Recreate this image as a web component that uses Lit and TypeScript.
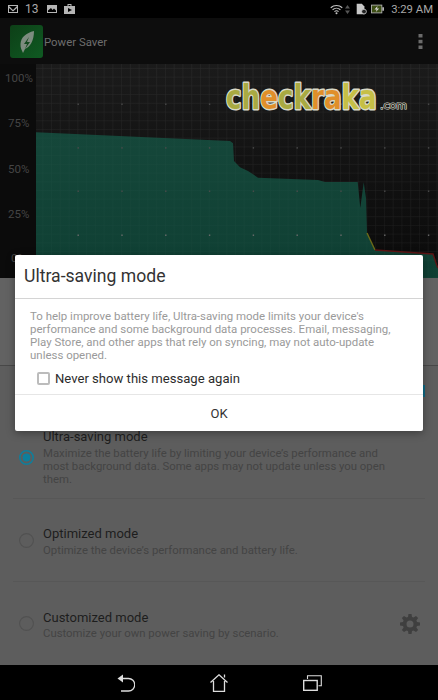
import { LitElement, html, css, svg } from "lit";
import { customElement } from "lit/decorators.js";

const MODES = [
  { name: "Ultra-saving mode", desc: "Maximize the battery life by limiting your device\u2019s performance and most background data. Some apps may not update unless you open them.", on: true, cls: "m1" },
  { name: "Optimized mode", desc: "Optimize the device\u2019s performance and battery life.", on: false, cls: "m2" },
  { name: "Customized mode", desc: "Customize your own power saving by scenario.", on: false, cls: "m3" },
];

const AREA = "36,132.3 230,141 233,143.3 234,161 240,167.3 248,171 258,177.7 318,180 325,182 357.7,182 360.3,208 363.7,182.3 366,198 367,233 375,250 433,254 436.7,265 438,268 438,278 36,278";

@customElement("app-root")
export class AppRoot extends LitElement {
  static styles = css`
    :host { display: block; width: 438px; height: 700px; position: relative; overflow: hidden; background: #5d5d5d; font-family: Roboto, "Liberation Sans", sans-serif; }
    .page { display: flex; flex-direction: column; height: 700px; }
    .status { height: 18px; background: #000; display: flex; align-items: center; padding: 0 5px 0 8px; color: #a8a8a8; font-size: 12px; flex: none; }
    .status svg { display: block; flex: none; }
    .status .n { margin: 0 8px 0 7px; }
    .spacer { flex: 1; }
    .time { font-size: 11.3px; margin-left: 7px; }
    .bar { height: 46px; background: #0d0d0d; display: flex; align-items: center; flex: none; color: #6e6e6e; font-size: 11.4px; padding-left: 10px; }
    .bar .title { margin-left: 1px; padding-top: 1px; }
    .chart { height: 214px; flex: none; display: block; width: 438px; background: #0a0a0a; }
    .modes { flex: 1; display: flex; flex-direction: column; padding: 0 13px; }
    .head { height: 87px; flex: none; background: #626262; margin: 0 -13px; border-bottom: 1px solid #484848; }
    .stub-row { height: 63px; flex: none; display: flex; justify-content: flex-end; }
    .stub { width: 2px; height: 12px; margin-top: 19px; background: #0e6a85; }
    .mode { display: grid; grid-template-columns: 30px 1fr 32px; align-items: center; border-bottom: 1px solid #575757; }
    .mode:last-child { border-bottom: 0; }
    .m1 { height: 70px; align-items: start; box-sizing: border-box; }
    .m2 { height: 82px; flex: none; }
    .m3 { flex: 1; }
    .m2 .txt, .m3 .txt { padding-top: 3px; }
    .radio { display: block; margin-left: 6px; }
    .m1 .radio { margin-top: 21px; }
    .name { font-size: 13px; color: #1d1d1d; line-height: 16px; }
    .desc { font-size: 11.35px; color: #444; line-height: 13.2px; margin-top: 1.8px; }
    .gear { display: block; justify-self: center; margin-left: 2px; }
    .nav { height: 35px; background: #000; flex: none; display: flex; align-items: center; justify-content: center; gap: 75px; }
    .nav svg { display: block; }
    .dialog { position: absolute; left: 15px; top: 255px; width: 408px; height: 176px; background: #fff; border-radius: 2px; box-shadow: 0 2px 8px rgba(0,0,0,.35); display: flex; flex-direction: column; }
    .dtitle { height: 44px; box-sizing: border-box; border-bottom: 1px solid #d4d4d4; font-size: 17.6px; color: #333; padding: 11px 0 0 9px; line-height: 20px; }
    .dbody { font-size: 11.46px; color: #9a9a9a; line-height: 13.2px; padding: 10.5px 30px 0 15px; }
    .check { display: flex; align-items: center; font-size: 13.1px; color: #2c2c2c; padding: 8px 0 0 22px; height: 16px; }
    .box { width: 9px; height: 9px; border: 2px solid #bcbcbc; border-radius: 2px; margin-right: 5px; flex: none; }
    .ok { margin-top: auto; height: 37px; border-top: 1px solid #e6e6e6; display: flex; align-items: center; justify-content: center; font-size: 13px; color: #333; box-sizing: border-box; }
  `;

  private chart() {
    const dots = [];
    for (const y of [104, 147.7, 191, 235]) for (let i = 0; i < 9; i++) dots.push(svg`<rect x="${77.5 + i * 43.8}" y="${y - 0.5}" width="1.4" height="1.4" fill="${y === 235 ? '#6d6d6d' : '#4c4c4c'}" />`);
    const G = "#a9aa42", O = "#e08f2a", Y = "#c6bf46";
    const stops: [number, string][] = [[0, G], [.225, G], [.225, O], [.344, O], [.344, G], [.563, G], [.563, O], [.762, O], [.762, Y], [1, Y]];
    return html`<svg class="chart" viewBox="0 64 438 214">
      <defs>
        <linearGradient id="bg" x1="0" y1="0" x2="0" y2="1"><stop offset="0" stop-color="#1b1b1b"/><stop offset=".6" stop-color="#101010"/><stop offset="1" stop-color="#0a0a0a"/></linearGradient>
        <linearGradient id="logo" gradientUnits="userSpaceOnUse" x1="0" y1="0" x2="190" y2="0">${stops.map(([o, c]) => svg`<stop offset="${o}" stop-color="${c}"/>`)}</linearGradient>
        <linearGradient id="teal" x1="0" y1="0" x2="0" y2="1"><stop offset="0" stop-color="#15473a"/><stop offset="1" stop-color="#0f3f33"/></linearGradient>
        <pattern id="grid" x="34.5" y="60.2" width="8.76" height="8.72" patternUnits="userSpaceOnUse"><path d="M8.76 0V8.72M0 8.72H8.76" stroke="#fff" stroke-opacity=".045" stroke-width="1" fill="none"/></pattern>
      </defs>
      <rect x="0" y="64" width="36" height="214" fill="#0b0b0b"/>
      <rect x="36" y="64" width="402" height="214" fill="url(#bg)"/>
      <rect x="36" y="64" width="402" height="214" fill="url(#grid)"/>
      <polygon points="${AREA}" fill="url(#teal)"/>
      <rect x="36" y="64" width="402" height="214" fill="url(#grid)" opacity=".6"/>
      ${dots}
      <polyline points="367,233 375,250" fill="none" stroke="#6b6a18" stroke-width="1.4"/>
      <polyline points="375,250 433,254 436.7,265 438,268" fill="none" stroke="#5c1414" stroke-width="1.4"/>
      <g font-family="Roboto, sans-serif" font-size="11.5" fill="#454545">
        <text x="5" y="82">100%</text><text x="8" y="127">75%</text><text x="8" y="173">50%</text><text x="8" y="218">25%</text><text x="11" y="262">0%</text>
      </g>
      <text transform="translate(226 108.5) scale(.795 1)" x="0" y="0" fill="url(#logo)" font-family="'DejaVu Sans', sans-serif" font-weight="700" font-size="33" stroke="#d9d9c8" stroke-width="2.8" paint-order="stroke" stroke-linejoin="round">checkraka</text>
      <text x="380" y="109" font-family="'DejaVu Sans', sans-serif" font-size="10.5" fill="#2a2a20" stroke="#d5d5c5" stroke-width="1.2" paint-order="stroke" textLength="27" lengthAdjust="spacingAndGlyphs">.com</text>
    </svg>`;
  }

  render() {
    return html`
      <div class="page">
        <div class="status">
          <svg width="10" height="8" viewBox="0 0 10 8"><rect x=".5" y=".5" width="9" height="7" fill="none" stroke="#b5b5b5"/><path d="M1 1l4 4 4-4v2L5 6.5 1 3z" fill="#b5b5b5"/></svg>
          <span class="n">13</span>
          <svg width="10" height="8" viewBox="0 0 10 8"><path d="M0 0h10v8H0zM1 5.5V7h8V5.5L7 3.5 5.5 5 4 3z" fill="#b5b5b5" fill-rule="evenodd"/></svg>
          <svg style="margin-left:7px" width="11" height="10" viewBox="0 0 11 10"><path d="M3.5 0h4v2H11v8H0V2h3.5zM4.5 1v1h2V1zM4 4v4l4-2z" fill="#b5b5b5" fill-rule="evenodd"/></svg>
          <span class="spacer"></span>
          <svg width="13" height="11" viewBox="0 0 14 11"><g fill="none" stroke="#c4c4c4" stroke-width="1.2"><path d="M.8 3.6a9 9 0 0 1 12.4 0"/><path d="M2.8 5.8a6.2 6.2 0 0 1 8.4 0"/><path d="M4.8 7.8a3.3 3.3 0 0 1 4.4 0"/></g><circle cx="7" cy="9.6" r="1.1" fill="#c4c4c4"/></svg>
          <svg style="margin-left:2px" width="5" height="9" viewBox="0 0 5 9"><path d="M2.5 0L5 3.5H0zM2.5 9L0 5.5h5z" fill="#555"/></svg>
          <svg style="margin-left:5px" width="12" height="12" viewBox="0 0 14 12"><path d="M2 0h6l3 3v9H2z" fill="#c8c8c8"/><circle cx="10.5" cy="9" r="2.8" fill="#222" stroke="#c8c8c8"/></svg>
          <svg style="margin-left:4px" width="13" height="10" viewBox="0 0 15 10"><rect x=".5" y=".5" width="12" height="9" fill="#3c4d14" stroke="#b5b5b5"/><rect x="13" y="3" width="2" height="4" fill="#b5b5b5"/><path d="M7.5 1.5L4 5.5h2.5L5.5 8.5 9.5 4.5H7z" fill="#d5d5d5"/></svg>
          <span class="time">3:29 AM</span>
        </div>
        <div class="bar">
          <svg width="33" height="33" viewBox="0 0 33 33"><defs><linearGradient id="ic" x1="0" y1="0" x2="1" y2="1"><stop offset="0" stop-color="#0d3f17"/><stop offset="1" stop-color="#0f5a22"/></linearGradient></defs><rect width="33" height="33" rx="3" fill="url(#ic)"/><path d="M24 6C16 8 11 12 10.5 19c-.3 4 1.5 6 2.5 9l2-4c5-2 9-8 9-18z" fill="#7d8c7f"/><path d="M19 12l-5 7h3l-2 5 5-7h-3z" fill="#14491f"/></svg>
          <span class="title">Power Saver</span>
          <span class="spacer"></span>
          <svg style="margin-right:15px" width="5" height="15" viewBox="0 0 4 15"><rect width="4" height="3.5" fill="#6b6b6b"/><rect y="5.8" width="4" height="3.5" fill="#6b6b6b"/><rect y="11.5" width="4" height="3.5" fill="#6b6b6b"/></svg>
        </div>
        ${this.chart()}
        <div class="modes">
          <div class="head"></div>
          <div class="stub-row"><div class="stub"></div></div>
          ${MODES.map((m) => html`<div class="mode ${m.cls}">
            ${m.on
              ? html`<svg class="radio" width="15" height="15" viewBox="0 0 15 15"><circle cx="7.5" cy="7.5" r="6.7" fill="none" stroke="#0d7f9d" stroke-width="1.5"/><circle cx="7.5" cy="7.5" r="3.9" fill="#0d7f9d"/></svg>`
              : html`<svg class="radio" width="15" height="15" viewBox="0 0 15 15"><circle cx="7.5" cy="7.5" r="6.9" fill="none" stroke="#515151" stroke-width="1.1"/></svg>`}
            <div class="txt"><div class="name">${m.name}</div><div class="desc">${m.desc}</div></div>
            ${m.cls === "m3" ? html`<svg class="gear" width="20" height="20" viewBox="0 0 20 20"><path fill="#3f3f3f" fill-rule="evenodd" d="M8.5 0h3l.5 3 1.5.6L16 1.900l2.100 2.100-1.700 2.500.6 1.500 3 .5v3l-3 .5-.6 1.500 1.700 2.500-2.100 2.100-2.500-1.700-1.500.6-.5 3h-3l-.5-3-1.500-.6L4 18.100 1.900 16l1.700-2.500-.6-1.500-3-.5v-3l3-.5.6-1.500L1.900 4 4 1.900l2.500 1.700L8 3zM10 6.500a3.500 3.500 0 1 0 0 7 3.500 3.500 0 0 0 0-7z"/></svg>` : html`<span></span>`}
          </div>`)}
        </div>
        <div class="nav">
          <svg width="18" height="20" viewBox="0 0 18 20"><path d="M4 5.5h7.500a5.800 5.800 0 0 1 0 12.500H4" fill="none" stroke="#ddd" stroke-width="1.3"/><path d="M6 1.500v8L.5 5.500z" fill="#ddd"/></svg>
          <svg width="18" height="18" viewBox="0 0 18 18"><path d="M.5 8.500L9 .8l8.500 7.700M3.500 7v10.300h11V7M14.500 3.500V.5" fill="none" stroke="#ddd" stroke-width="1.3"/></svg>
          <svg width="19" height="16" viewBox="0 0 19 16"><rect x=".7" y="5.500" width="13.500" height="9.800" fill="none" stroke="#ddd" stroke-width="1.4"/><path d="M4.500 4V.7h13.800v10H15.500" fill="none" stroke="#ddd" stroke-width="1.1"/></svg>
        </div>
      </div>
      <div class="dialog">
        <div class="dtitle">Ultra-saving mode</div>
        <div class="dbody">To help improve battery life, Ultra-saving mode limits your device's performance and some background data processes. Email, messaging, Play Store, and other apps that rely on syncing, may not auto-update unless opened.</div>
        <div class="check"><span class="box"></span>Never show this message again</div>
        <div class="ok">OK</div>
      </div>`;
  }
}
